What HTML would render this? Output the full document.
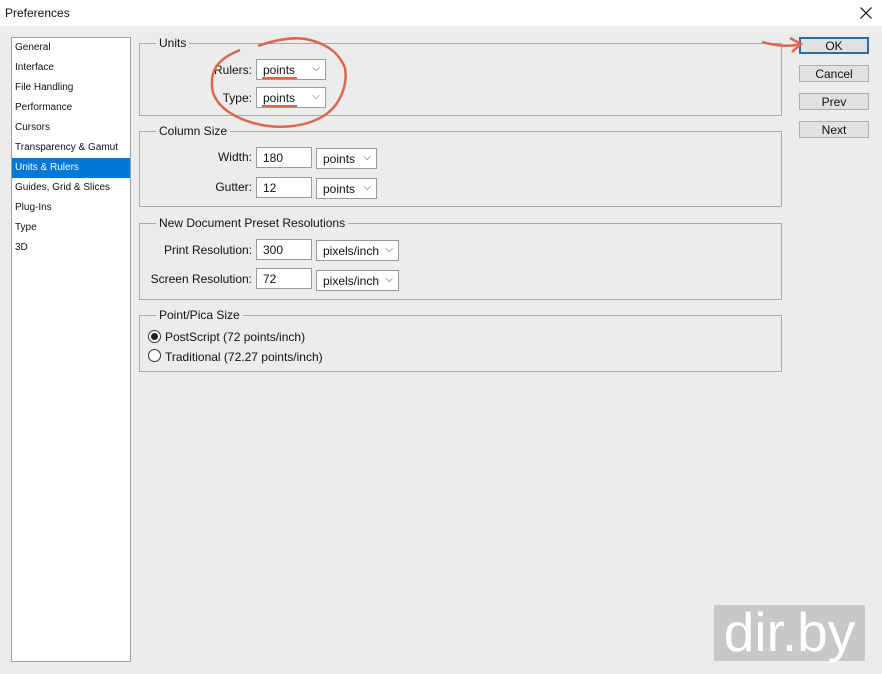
<!DOCTYPE html>
<html><head><style>
body{margin:0;width:882px;height:674px;background:#ececec;font-family:"Liberation Sans",sans-serif;position:relative;overflow:hidden;color:#111}
.a{position:absolute}
.title{left:0;top:0;width:882px;height:26px;background:#fff;font-size:12px}
.side{left:11px;top:37px;width:118px;height:623px;background:#fff;border:1px solid #a0a0a0;font-size:10px}
.side div{height:20px;line-height:20px;padding-left:3px}
.side .sel{background:#0078d7;color:#fff}
.grp{border:1px solid #a8a8a8;left:139px;width:641px}
.gl{font-size:12px;background:#ececec;padding:0 3px;left:16px;top:-8px;position:absolute}
.lbl{font-size:12px;text-align:right;width:120px}
.inp{background:#fff;border:1px solid #9a9a9a;font-size:12px;height:21px;line-height:20px;padding-left:6px;box-sizing:border-box}
.sel2{background:#fff;border:1px solid #9a9a9a;font-size:12px;height:21px;line-height:21px;padding-left:6px;box-sizing:border-box}
.sel2:after{content:"⌵";position:absolute;right:5px;top:-2px;font-size:10px;color:#444}
.btn{left:799px;width:70px;height:17px;background:#e1e1e1;border:1px solid #adadad;font-size:12px;text-align:center;line-height:16px;box-sizing:border-box}
</style></head><body>
<div class="a title"><span class="a" style="left:5px;top:6px">Preferences</span>
<svg class="a" style="left:860px;top:7px" width="12" height="12"><path d="M0.5,0.5 L11.5,11.5 M11.5,0.5 L0.5,11.5" stroke="#111" stroke-width="1.2"/></svg></div>
<div class="a side">
<div>General</div><div>Interface</div><div>File Handling</div><div>Performance</div><div>Cursors</div><div>Transparency &amp; Gamut</div><div class="sel">Units &amp; Rulers</div><div>Guides, Grid &amp; Slices</div><div>Plug-Ins</div><div>Type</div><div>3D</div>
</div>
<div class="a grp" style="top:43px;height:71px"><span class="gl">Units</span></div>
<div class="a grp" style="top:131px;height:74px"><span class="gl">Column Size</span></div>
<div class="a grp" style="top:223px;height:75px"><span class="gl">New Document Preset Resolutions</span></div>
<div class="a grp" style="top:315px;height:55px"><span class="gl">Point/Pica Size</span></div>

<div class="a lbl" style="left:132px;top:63px">Rulers:</div>
<div class="a sel2" style="left:256px;top:59px;width:70px">points</div>
<div class="a lbl" style="left:132px;top:91px">Type:</div>
<div class="a sel2" style="left:256px;top:87px;width:70px">points</div>

<div class="a lbl" style="left:132px;top:150px">Width:</div>
<div class="a inp" style="left:256px;top:147px;width:56px">180</div>
<div class="a sel2" style="left:316px;top:148px;width:61px">points</div>
<div class="a lbl" style="left:132px;top:180px">Gutter:</div>
<div class="a inp" style="left:256px;top:177px;width:56px">12</div>
<div class="a sel2" style="left:316px;top:178px;width:61px">points</div>

<div class="a lbl" style="left:132px;top:243px">Print Resolution:</div>
<div class="a inp" style="left:256px;top:239px;width:56px">300</div>
<div class="a sel2" style="left:316px;top:240px;width:83px">pixels/inch</div>
<div class="a lbl" style="left:132px;top:272px">Screen Resolution:</div>
<div class="a inp" style="left:256px;top:268px;width:56px">72</div>
<div class="a sel2" style="left:316px;top:270px;width:83px">pixels/inch</div>

<div class="a" style="left:148px;top:330px;width:11px;height:11px;border:1px solid #333;border-radius:50%;background:#fff"><div class="a" style="left:2px;top:2px;width:7px;height:7px;border-radius:50%;background:#222"></div></div>
<div class="a" style="left:165px;top:330px;font-size:12px">PostScript (72 points/inch)</div>
<div class="a" style="left:148px;top:349px;width:11px;height:11px;border:1px solid #333;border-radius:50%;background:#fff"></div>
<div class="a" style="left:165px;top:350px;font-size:12px">Traditional (72.27 points/inch)</div>

<div class="a btn" style="top:37px;border:2px solid #2a6f9c;line-height:15px">OK</div>
<div class="a btn" style="top:65px">Cancel</div>
<div class="a btn" style="top:93px">Prev</div>
<div class="a btn" style="top:121px">Next</div>

<svg class="a" style="left:0;top:0" width="882" height="674">
<path d="M258,46 C275,40 295,36 310,40 C330,45 340,55 345,68 C348,85 340,105 325,115 C305,128 275,130 250,122 C225,114 212,100 212,85 C211,68 220,58 240,50" fill="none" stroke="#d9684e" stroke-width="2.5"/>
<path d="M262,78 H297 M262,106 H297" stroke="#d9684e" stroke-width="2"/>
<path d="M762,42 C775,46 790,47 801,44 M790,38 L801,44 L792,52" fill="none" stroke="#d9684e" stroke-width="2.5"/>
</svg>
<div class="a" style="left:714px;top:605px;width:151px;height:56px;background:#c8c8c8;color:#fff;font-size:55px;line-height:54px;text-align:center">dir.by</div>
</body></html>
